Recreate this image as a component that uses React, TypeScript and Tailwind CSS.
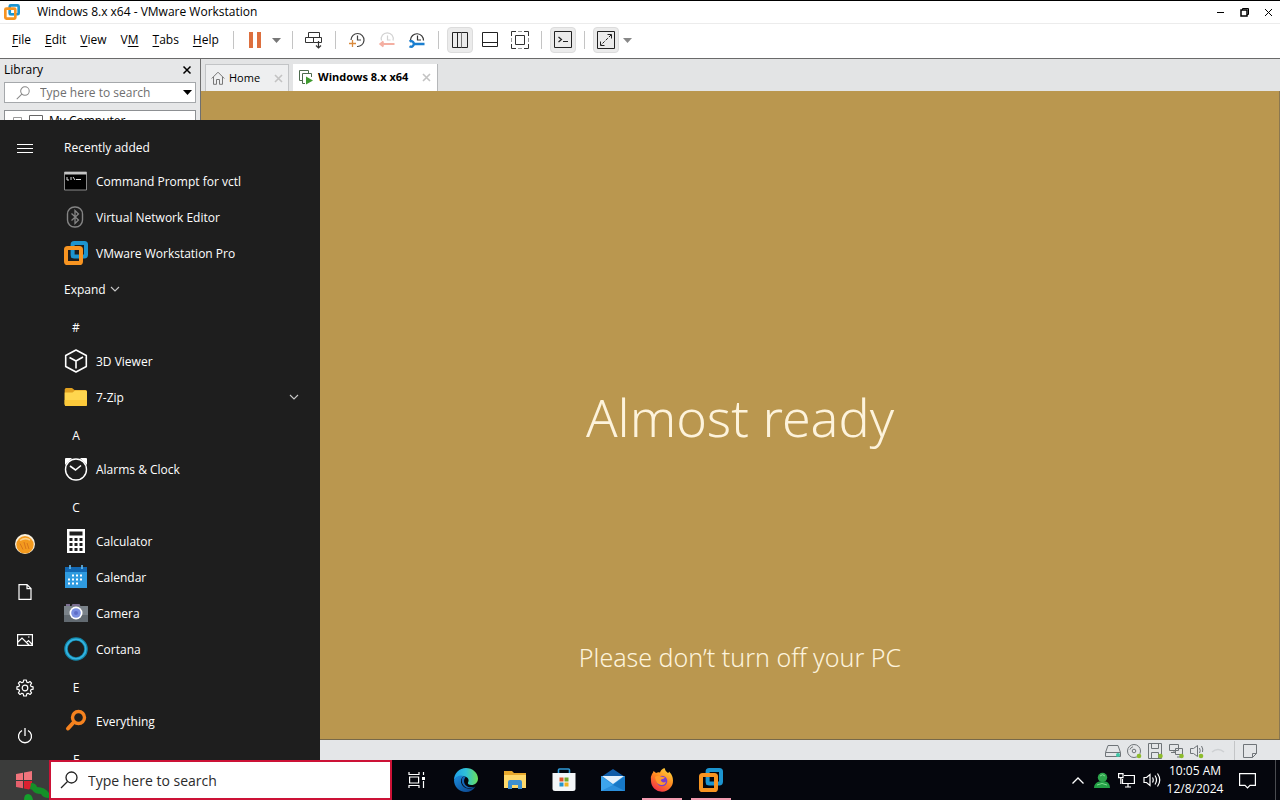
import type { ReactNode } from "react";

function VmwareLogo({ size }: { size: number }) {
  return (
    <svg width={size} height={size} viewBox="0 0 24 24" fill="none" aria-hidden="true">
      <rect x="8.6" y="2" width="13.4" height="13.4" rx="1.6" stroke="#1c94cf" strokeWidth="4" />
      <rect x="2" y="7" width="15" height="15" rx="1.6" stroke="#f79421" strokeWidth="4" />
      <path d="M8.6 9.2V15.4H14.8" stroke="#1c94cf" strokeWidth="2.6" />
    </svg>
  );
}

function Chevron() {
  return (
    <svg width="10" height="10" viewBox="0 0 10 10" fill="none" stroke="#c9c9c9" strokeWidth="1.1" aria-hidden="true">
      <path d="M1 3l4 4 4-4" />
    </svg>
  );
}

function Caret({ color }: { color: string }) {
  return (
    <svg width="9" height="5" viewBox="0 0 9 5" aria-hidden="true">
      <path d="M0 0h9L4.5 5z" fill={color} />
    </svg>
  );
}

function Magnifier({ size, color }: { size: number; color: string }) {
  return (
    <svg width={size} height={size} viewBox="0 0 18 18" fill="none" stroke={color} strokeWidth="1.3" aria-hidden="true">
      <circle cx="11.5" cy="6.5" r="5.5" />
      <path d="M7.5 10.5 1 17" />
    </svg>
  );
}

/* ---------- VMware window ---------- */

const MENUS: [string, string, string][] = [
  ["", "F", "ile"],
  ["", "E", "dit"],
  ["", "V", "iew"],
  ["V", "M", ""],
  ["", "T", "abs"],
  ["", "H", "elp"],
];

function TitleBar() {
  return (
    <header className="flex h-[23px] shrink-0 items-center border-t border-black bg-white">
      <div className="w-[37px] pl-1">
        <VmwareLogo size={16} />
      </div>
      <h1 className="flex-1 text-[12px]">Windows 8.x x64 - VMware Workstation</h1>
      <button aria-label="Minimize" className="flex h-full w-6 items-center justify-center">
        <svg width="9" height="9" viewBox="0 0 9 9"><path d="M1 4.500h7" stroke="#000" /></svg>
      </button>
      <button aria-label="Restore" className="flex h-full w-6 items-center justify-center">
        <svg width="9" height="9" viewBox="0 0 9 9" fill="none" stroke="#000">
          <path d="M2.500 2V.500h6v6H7" />
          <rect x="1" y="2" width="6" height="6" strokeWidth="1.500" />
        </svg>
      </button>
      <button aria-label="Close" className="flex h-full w-6 items-center justify-center">
        <svg width="9" height="9" viewBox="0 0 9 9"><path d="M1 1l7 7M8 1 1 8" stroke="#000" /></svg>
      </button>
    </header>
  );
}

function Separator() {
  return (
    <div className="flex w-[13px] shrink-0 justify-center">
      <div className="h-[18px] w-px bg-[#c4c4c4]" />
    </div>
  );
}

function Tool({ label, active = false, children }: { label: string; active?: boolean; children: ReactNode }) {
  return (
    <button
      aria-label={label}
      className={
        active
          ? "mx-[2px] flex size-[26px] shrink-0 items-center justify-center rounded border border-[#dcdcdc] bg-[#ebebeb]"
          : "mx-[2px] flex size-[26px] shrink-0 items-center justify-center"
      }
    >
      {children}
    </button>
  );
}

function MenuBar() {
  return (
    <div className="flex h-[35px] shrink-0 items-center border-t border-[#ececec] bg-white pb-[2px]">
      <nav className="flex w-[227px] shrink-0 pl-[5px]">
        {MENUS.map(([before, key, after]) => (
          <button key={before + key + after} className="px-[7px] text-[12px]">
            {before}
            <span className="underline underline-offset-2">{key}</span>
            {after}
          </button>
        ))}
      </nav>
      <Separator />
      <Tool label="Suspend">
        <svg width="14" height="16" viewBox="0 0 14 16" fill="#dd6f3e"><path d="M1 0h4v16H1zM9 0h4v16H9z" /></svg>
      </Tool>
      <button aria-label="Power options" className="mr-[3px] flex w-[13px] justify-center">
        <Caret color="#777" />
      </button>
      <Separator />
      <Tool label="Send Ctrl+Alt+Del">
        <svg width="18" height="18" viewBox="0 0 18 18" fill="none" stroke="#333">
          <path d="M3.500 1.500h11v5h-11zM.500 6.500h8v5h-8zM8.500 6.500h8v5h-8z" />
          <path d="M13.500 10v7M11 14.500l2.500 2.500 2.500-2.500" strokeWidth="1.200" />
        </svg>
      </Tool>
      <Separator />
      <Tool label="Take snapshot">
        <svg width="18" height="18" viewBox="0 0 18 18" fill="none" stroke="#444" strokeWidth="1.200">
          <path d="M3 9A6.500 6.500 0 1 1 9 15.500" />
          <path d="M9.500 4.500V9H13" />
          <path d="M1 12.500h7M4.500 9v7" stroke="#d98a3d" strokeWidth="1.300" />
        </svg>
      </Tool>
      <Tool label="Revert snapshot">
        <svg width="18" height="18" viewBox="0 0 18 18" fill="none" stroke="#d2d2d2" strokeWidth="1.200">
          <path d="M3.500 9.500A6 6 0 1 1 15 9.500" />
          <path d="M9.500 4.500V9h3" />
          <path d="M2.500 13h14M5.500 10.500 2.500 13l3 2.500" stroke="#f4afa2" strokeWidth="2.200" />
        </svg>
      </Tool>
      <Tool label="Manage snapshots">
        <svg width="18" height="18" viewBox="0 0 18 18" fill="none" stroke="#333" strokeWidth="1.200">
          <path d="M2.500 9A6.500 6.500 0 1 1 15.500 9.500" />
          <path d="M9.500 4.500V9H13" />
          <path d="M1.500 10.500a2.800 2.800 0 1 1 0 4.800M6 13h10.500" stroke="#1b7fd0" strokeWidth="2.400" />
        </svg>
      </Tool>
      <Separator />
      <Tool label="Show library" active>
        <svg width="18" height="18" viewBox="0 0 18 18" fill="none" stroke="#222"><path d="M1.500 1.500h15v15h-15zM6.500 1.500v15" /><path d="M10.500 1.500v15" stroke="#777" /></svg>
      </Tool>
      <Tool label="Show thumbnail bar">
        <svg width="18" height="18" viewBox="0 0 18 18" fill="none" stroke="#222"><path d="M1.500 1.500h15v14h-15zM1.500 11.500h15" /></svg>
      </Tool>
      <Tool label="Full screen">
        <svg width="20" height="20" viewBox="0 0 20 20" fill="none" stroke="#333"><path d="M1.500 6V1.500H6M14 1.500h4.500V6M18.500 14v4.500H14M6 18.500H1.500V14M5.500 5.500h9v9h-9z" /><path d="M8 1.500h4M18.500 8v4M12 18.500H8M1.500 12V8" stroke="#999" /></svg>
      </Tool>
      <Separator />
      <Tool label="Console view" active>
        <svg width="18" height="18" viewBox="0 0 18 18" fill="none" stroke="#222"><path d="M.500.500h17v16H.500z" /><path d="M4.500 6l3 2.500-3 2.500M9 10.500h5" strokeWidth="1.200" /></svg>
      </Tool>
      <Separator />
      <Tool label="Stretch guest" active>
        <svg width="18" height="18" viewBox="0 0 18 18" fill="none" stroke="#222"><path d="M.500.500h17v17H.500z" /><path d="M10.500 3.500h4v4M3.500 10.500v4h4" /><path d="M14 4 4 14" strokeDasharray="3 1.500" /></svg>
      </Tool>
      <button aria-label="Stretch options" className="flex w-[13px] justify-center">
        <Caret color="#888" />
      </button>
    </div>
  );
}

function Library() {
  return (
    <aside className="flex w-[201px] shrink-0 flex-col border-r border-[#6f6f6f] bg-[#e6e7e8] pl-1">
      <div className="flex h-[23px] items-center justify-between pr-2 pb-[2px]">
        <h2 className="text-[12px]">Library</h2>
        <button aria-label="Close library">
          <svg width="10" height="10" viewBox="0 0 10 10"><path d="M1.500 1.500l7 7M8.500 1.500l-7 7" stroke="#000" strokeWidth="1.500" /></svg>
        </button>
      </div>
      <div className="mr-1 flex h-[21px] items-center border border-[#a5a8ab] bg-white pr-[3px] pl-[11px]">
        <Magnifier size={14} color="#888" />
        <input
          aria-label="Search library"
          placeholder="Type here to search"
          className="ml-[10px] w-0 flex-1 text-[12px] outline-none placeholder:text-[#6f6f6f]"
        />
        <Caret color="#000" />
      </div>
      <div className="mt-[7px] mr-1 flex-1 border border-[#8d9093] bg-white">
        <div className="flex h-5 items-center pl-2 text-[12px]">
          <svg width="9" height="9" viewBox="0 0 9 9" fill="none" stroke="#999"><path d="M.500.500h8v8h-8zM2 4.500h5" /></svg>
          <svg className="ml-[7px]" width="14" height="12" viewBox="0 0 14 12" fill="none" stroke="#666"><path d="M.500.500h13v9H.500zM4 11.500h6" /></svg>
          <span className="ml-[6px]">My Computer</span>
        </div>
      </div>
    </aside>
  );
}

function TabClose() {
  return (
    <svg width="9" height="9" viewBox="0 0 9 9" aria-hidden="true"><path d="M1 1l7 7M8 1 1 8" stroke="#c3c3c3" strokeWidth="1.600" /></svg>
  );
}

function TabStrip() {
  return (
    <div className="flex h-8 shrink-0 items-end gap-1 bg-[#e3e4e5] pl-1" role="tablist">
      <button role="tab" aria-selected="false" className="flex h-[27px] w-[84px] items-center border border-b-0 border-[#c2c4c6] bg-[#eeeff0] pr-[5px] pl-[5px] text-[11px]">
        <svg width="14" height="14" viewBox="0 0 14 14" fill="none" stroke="#777"><path d="M.700 7.500 7 1.200l6.300 6.300M2.500 6v7.300h3V8.500h3v4.800h3V6" /></svg>
        <span className="ml-1 flex-1 text-left">Home</span>
        <TabClose />
      </button>
      <button role="tab" aria-selected="true" className="flex h-[27px] w-[145px] items-center border-r border-[#b5b7b9] bg-white pr-[6px] pl-[6px] text-[11px] font-bold">
        <svg width="15" height="15" viewBox="0 0 15 15" fill="none" stroke="#4e6b4e">
          <path d="M3 10.500H.500V.500h9V3" />
          <path d="M6 13.500H3.500v-10h9V7" />
          <path d="M7 6.500v8l7-4z" fill="#3f9a2f" stroke="none" />
        </svg>
        <span className="ml-1 flex-1 text-left whitespace-nowrap">Windows 8.x x64</span>
        <TabClose />
      </button>
    </div>
  );
}

function StatusBar() {
  return (
    <footer className="flex h-[21px] shrink-0 items-center justify-end gap-[5px] border-t border-[#77694a] bg-[#e4e6e8] pt-px pr-[23px]">
      <svg width="16" height="16" viewBox="0 0 16 16" fill="none" stroke="#6f7478"><path d="M.500 9.500 3 2.500h10l2.500 7v4H.500zM.500 9.500h15" /><circle cx="13" cy="12" r="2" fill="#3cc7a6" stroke="none" /></svg>
      <svg width="16" height="16" viewBox="0 0 16 16" fill="none" stroke="#6f7478"><circle cx="8" cy="8" r="6.500" /><circle cx="8" cy="8" r="1.800" /><path d="M4 6.500A4.500 4.500 0 0 1 7 3.700" /><circle cx="13" cy="13" r="2.300" fill="#8dbb2c" stroke="none" /></svg>
      <svg width="16" height="16" viewBox="0 0 16 16" fill="none" stroke="#6f7478"><path d="M1.500.500h13v15h-13zM4.500.500v5h7v-5M4.500 15.500v-6h7v6" /><circle cx="13.500" cy="13" r="2.300" fill="#8dbb2c" stroke="none" /></svg>
      <svg width="16" height="16" viewBox="0 0 16 16" fill="none" stroke="#6f7478"><path d="M1.500 1.500h9v6h-9zM6 7.500v2M3 9.500h4M7.500 5.500h7v6h-7zM9 14h4" /><circle cx="13.500" cy="13" r="2.300" fill="#8dbb2c" stroke="none" /></svg>
      <svg width="16" height="16" viewBox="0 0 16 16" fill="none" stroke="#6f7478"><path d="M1.500 5.500h3l4-3v11l-4-3h-3zM10.500 5q1.500 3 0 5M12.500 3q2 3 1 6" /><circle cx="12" cy="13" r="2.300" fill="#8dbb2c" stroke="none" /></svg>
      <svg width="16" height="16" viewBox="0 0 16 16" fill="none" stroke="#cdd0d2"><path d="M2 9q6-5 12 0" strokeWidth="1.500" /></svg>
      <div className="ml-[3px] h-full w-px bg-[#c3c5c7]" />
      <svg className="ml-[3px]" width="14" height="14" viewBox="0 0 14 14" fill="none" stroke="#6f7478"><path d="M.500.500h13v9l-4 4h-9zM9.500 13.500v-4h4" /></svg>
    </footer>
  );
}

/* ---------- Start menu ---------- */

const appIcons: Record<string, ReactNode> = {
  cmd: (
    <svg width="24" height="24" viewBox="0 0 24 24"><path d="M.500 3h22v18H.500z" fill="#000" stroke="#8a8a8a" /><path d="M.500 3h22v2.500H.500z" fill="#c4c4c4" /><path d="M3 8v3h2M7 8v3M9 8l2 3M12 10.500h5" stroke="#ddd" fill="none" /></svg>
  ),
  network: (
    <svg width="24" height="24" viewBox="0 0 24 24" fill="none" stroke="#858585"><rect x="3.500" y="2" width="15" height="20" rx="7" strokeWidth="1.400" /><path d="M7.500 8.500l7 6.500-3.500 3.500v-13l3.500 3.500-7 6.500" strokeWidth="1.300" /></svg>
  ),
  vmware: <VmwareLogo size={24} />,
  cube: (
    <svg width="24" height="24" viewBox="0 0 24 24" fill="none" stroke="#fff" strokeWidth="1.600" strokeLinejoin="round"><path d="M12 1 22.300 6.500v11L12 23 1.700 17.500v-11zM5.500 8.500 12 12l7-4M12 12v7.500" /></svg>
  ),
  folder: (
    <svg width="24" height="24" viewBox="0 0 24 24"><path d="M.700 4.500q0-1.500 1.500-1.500H8l2.500 2h11q1.500 0 1.500 1.500V19H.700z" fill="#e0a020" /><path d="M.700 7.500h7.800l2.500-2h10.500q1.500 0 1.500 1.500v12.500q0 1.500-1.500 1.500H2.200q-1.500 0-1.500-1.500z" fill="#ffd64f" /><path d="M.700 15h22.300v4.500q0 1.500-1.500 1.500H2.200q-1.500 0-1.500-1.500z" fill="#fbc93a" /></svg>
  ),
  clock: (
    <svg width="24" height="24" viewBox="0 0 24 24" fill="none"><path d="M1 8V2q0-1 1-1h6zM23 8V2q0-1-1-1h-6z" fill="#fff" /><circle cx="12" cy="12.500" r="10.500" fill="#1e1e1e" stroke="#fff" strokeWidth="1.400" /><path d="M6 9l5.500 4L17 8.500" stroke="#fff" strokeWidth="1.600" /></svg>
  ),
  calculator: (
    <svg width="24" height="24" viewBox="0 0 24 24"><path d="M3 0h18v24H3z" fill="#fff" /><path d="M5.500 2.500h13v4h-13zM5.500 9h3v3h-3zM10.500 9h3v3h-3zM15.500 9h3v3h-3zM5.500 14h3v3h-3zM10.500 14h3v3h-3zM15.500 14h3v3h-3zM5.500 19h3v3h-3zM10.500 19h3v3h-3zM15.500 19h3v3h-3z" fill="#1e1e1e" /></svg>
  ),
  calendar: (
    <svg width="24" height="24" viewBox="0 0 24 24"><path d="M1 2h22v21H1z" fill="#2f9be0" /><path d="M1 2h22v5H1z" fill="#1268b3" /><path d="M6 0v4M18 0v4" stroke="#67bdf2" strokeWidth="1.600" /><path d="M8 10.500h12M4 14.500h15M4 18.500h11" stroke="#fff" strokeWidth="2" strokeDasharray="2 2" /></svg>
  ),
  camera: (
    <svg width="24" height="24" viewBox="0 0 24 24"><path d="M2 3h4v3H2zM8.500 3h7l1.500 3h-10z" fill="#7b6f91" /><path d="M0 5h24v16H0z" fill="#7b838a" /><path d="M0 14h24v7H0z" fill="#626a71" /><circle cx="12" cy="12" r="6.500" fill="#fff" /><circle cx="12" cy="12" r="4.800" fill="#7b8fe0" /><circle cx="12" cy="12" r="2" fill="#5f6dc8" /></svg>
  ),
  cortana: (
    <svg width="24" height="24" viewBox="0 0 24 24" fill="none"><circle cx="12" cy="12" r="10" stroke="#1386a8" strokeWidth="3.600" /><circle cx="12" cy="12" r="9.800" stroke="#35b4e2" strokeWidth="1.600" /></svg>
  ),
  everything: (
    <svg width="24" height="24" viewBox="0 0 24 24" fill="none" stroke="#f5821f" strokeLinecap="round"><circle cx="14.500" cy="8.500" r="6" strokeWidth="3.400" /><path d="M9.500 13.500 4 19.500" strokeWidth="4" /></svg>
  ),
};

type Entry =
  | { kind: "heading"; text: string }
  | { kind: "expand"; text: string }
  | { kind: "letter"; text: string }
  | { kind: "app"; text: string; icon: string; folder?: boolean };

const ENTRIES: Entry[] = [
  { kind: "heading", text: "Recently added" },
  { kind: "app", text: "Command Prompt for vctl", icon: "cmd" },
  { kind: "app", text: "Virtual Network Editor", icon: "network" },
  { kind: "app", text: "VMware Workstation Pro", icon: "vmware" },
  { kind: "expand", text: "Expand" },
  { kind: "letter", text: "#" },
  { kind: "app", text: "3D Viewer", icon: "cube" },
  { kind: "app", text: "7-Zip", icon: "folder", folder: true },
  { kind: "letter", text: "A" },
  { kind: "app", text: "Alarms & Clock", icon: "clock" },
  { kind: "letter", text: "C" },
  { kind: "app", text: "Calculator", icon: "calculator" },
  { kind: "app", text: "Calendar", icon: "calendar" },
  { kind: "app", text: "Camera", icon: "camera" },
  { kind: "app", text: "Cortana", icon: "cortana" },
  { kind: "letter", text: "E" },
  { kind: "app", text: "Everything", icon: "everything" },
  { kind: "letter", text: "F" },
];

function EntryRow({ entry }: { entry: Entry }) {
  if (entry.kind === "heading") return <h2 className="flex h-9 items-center pt-[6px]">{entry.text}</h2>;
  if (entry.kind === "letter")
    return <button className="flex h-9 w-6 items-center justify-center pt-[6px]">{entry.text}</button>;
  if (entry.kind === "expand")
    return (
      <button className="flex h-9 items-center gap-1">
        <span className="pt-[2px]">{entry.text}</span>
        <Chevron />
      </button>
    );
  return (
    <button className="flex h-9 w-full items-center gap-2 pr-[21px] text-left">
      {appIcons[entry.icon]}
      <span className="flex-1 pt-[2px]">{entry.text}</span>
      {entry.folder && <Chevron />}
    </button>
  );
}

function RailButton({ label, children }: { label: string; children: ReactNode }) {
  return (
    <button aria-label={label} className="flex h-12 w-[50px] items-center justify-center">
      {children}
    </button>
  );
}

function StartMenu() {
  return (
    <section aria-label="Start" className="absolute bottom-0 left-0 flex h-[640px] w-80 overflow-hidden bg-[#1e1e1e] text-[12px] text-white">
      <div className="flex w-[50px] shrink-0 flex-col pt-1">
        <RailButton label="Menu">
          <svg width="16" height="12" viewBox="0 0 16 12" stroke="#fff"><path d="M0 2.500h16M0 6.500h16M0 10.500h16" /></svg>
        </RailButton>
        <div className="flex-1" />
        <RailButton label="Account">
          <svg width="20" height="20" viewBox="0 0 20 20"><circle cx="10" cy="10" r="10" fill="#f8f0de" /><circle cx="10" cy="10.800" r="8.700" fill="#f39a1e" /><path d="M5 6.500q5-3.500 10-.5" stroke="#fbd08a" fill="none" strokeWidth="1.500" /><path d="M5 9.500l3 6M12 9l2 6M9 8l2 7" stroke="#d9761a" fill="none" /></svg>
        </RailButton>
        <RailButton label="Documents">
          <svg width="14" height="16" viewBox="0 0 14 16" fill="none" stroke="#fff" strokeWidth="1.200"><path d="M1 .600h8l4 4v10.800H1zM9 .600v4h4" /></svg>
        </RailButton>
        <RailButton label="Pictures">
          <svg width="16" height="12" viewBox="0 0 16 12" fill="none" stroke="#fff" strokeWidth="1.200"><path d="M.600.600h14.800v10.800H.600zM1 8l4-4 7 7M9.500 8.500 11.500 6.500l3.800 4" /><path d="M11 3h1.500" /></svg>
        </RailButton>
        <RailButton label="Settings">
          <svg width="18" height="18" viewBox="0 0 18 18" fill="none" stroke="#fff" strokeWidth="1.200" strokeLinejoin="round">
            <path d="M7.700 1h2.600l.500 2.100 1.300.600 1.900-1.200 1.600 1.600-1.200 1.900.6 1.300 2.100.500v2.400l-2.100.5-.6 1.300 1.200 1.900-1.600 1.600-1.900-1.200-1.300.6-.5 2.100H7.700l-.5-2.100-1.300-.6L4 15.500l-1.600-1.600L3.600 12 3 10.700.900 10.200V7.800L3 7.300 3.600 6 2.400 4.100 4 2.500l1.900 1.200 1.300-.6z" />
            <circle cx="9" cy="9" r="2.800" />
          </svg>
        </RailButton>
        <RailButton label="Power">
          <svg width="16" height="16" viewBox="0 0 16 16" fill="none" stroke="#fff" strokeWidth="1.300"><path d="M5 2.500a6.500 6.500 0 1 0 6 0M8 0v8" /></svg>
        </RailButton>
      </div>
      <div className="flex flex-1 flex-col pt-[7px] pl-[14px]">
        {ENTRIES.map((entry) => (
          <div key={entry.text} className="shrink-0">
            <EntryRow entry={entry} />
          </div>
        ))}
      </div>
    </section>
  );
}

/* ---------- Taskbar ---------- */

function TaskButton({ label, running = false, children }: { label: string; running?: boolean; children: ReactNode }) {
  return (
    <button aria-label={label} className="flex h-full w-[49px] flex-col items-center">
      <span className="flex flex-1 items-center pt-[2px]">{children}</span>
      <span className={running ? "h-[2px] w-10 bg-[#f29bb0]" : "h-[2px] w-10"} />
    </button>
  );
}

function Taskbar() {
  return (
    <div className="flex h-10 shrink-0 items-center bg-[#05060d] text-white">
      <button aria-label="Start" className="flex h-full w-[49px] items-end justify-end bg-[#3b3c3b]">
        <svg width="33" height="30" viewBox="0 0 33 30">
          <path d="M0 4l7-1.200V10H0zM8 2.600 16 1v9H8z" fill="#f0747c" />
          <path d="M0 11h7v7.200L0 17z" fill="#e5606c" />
          <path d="M8 11h8v5l-3 3.500-5-1z" fill="#dc2030" />
          <path d="M15 13q5 0 6 4 8 0 12 6v5q-6 0-8-4-6 0-8-3-1-2-3-2z" fill="#149128" />
          <path d="M8 30q0-6 4-6t5 6z" fill="#14a02c" />
        </svg>
      </button>
      <label className="flex h-10 w-[343px] items-center border-2 border-[#cc1236] bg-white pl-[9px]">
        <Magnifier size={18} color="#222" />
        <input
          aria-label="Search"
          placeholder="Type here to search"
          className="ml-[10px] min-w-0 flex-1 text-[14px] outline-none placeholder:text-[#2b2b2b]"
        />
      </label>
      <TaskButton label="Task View">
        <svg width="18" height="16" viewBox="0 0 18 16" fill="none" stroke="#fff" strokeWidth="1.200"><path d="M1 0v2.500h10V0M1 16v-2.500h10V16M1.600 5h9v6h-9zM15.500 0v3M15.500 9v7" /><path d="M14 5h3v3h-3z" fill="#fff" stroke="none" /></svg>
      </TaskButton>
      <TaskButton label="Edge">
        <svg width="24" height="24" viewBox="0 0 24 24">
          <defs>
            <linearGradient id="edgeTop" x1="0" y1=".4" x2="1" y2=".4"><stop offset="0" stopColor="#1f9fe8" /><stop offset=".5" stopColor="#2fc0d8" /><stop offset="1" stopColor="#6be058" /></linearGradient>
            <linearGradient id="edgeLow" x1="0" y1="0" x2="1" y2="1"><stop offset="0" stopColor="#1b8fe0" /><stop offset="1" stopColor="#0b3f86" /></linearGradient>
          </defs>
          <path d="M0 12C0 5 5.400 0 12 0s12 5 12 10.500c0 4-3 6.500-6.500 6.500-3 0-4-1.300-3.500-2.500.8-1.500.8-2.500 0-4C12.500 7.500 4 6 0 12z" fill="url(#edgeTop)" />
          <path d="M0 12c2-4 6-5.500 10-4-4 2-4 8 0 11 3.500 2.600 8.500 2 11.500-.500C19.500 22 16 24 12 24 5 24 0 18.700 0 12z" fill="url(#edgeLow)" />
          <path d="M10 8c-3 2-3 7 0 10 3 3 8 2.500 11.500.5-3 1.500-7.500 1-9.500-1-2.500-2.500-2.500-6-.500-8z" fill="#1465b8" />
        </svg>
      </TaskButton>
      <TaskButton label="File Explorer">
        <svg width="22" height="20" viewBox="0 0 22 20"><path d="M0 1h8l2 2h12v15H0z" fill="#e8a92d" /><path d="M0 5h22v13H0z" fill="#ffd96b" /><path d="M4 19v-7q0-2 2-2h10q2 0 2 2v7h-4v-4H8v4z" fill="#3e8fd0" /></svg>
      </TaskButton>
      <TaskButton label="Microsoft Store">
        <svg width="24" height="24" viewBox="0 0 24 24"><path d="M6.500 6V2q0-1 1-1h9q1 0 1 1v4" fill="none" stroke="#2f9bd8" strokeWidth="1.600" /><path d="M.500 5h23v15.500q0 2.500-2.500 2.500H3q-2.500 0-2.500-2.500z" fill="#f4f6f8" /><path d="M7.500 9.500h4v4h-4z" fill="#e0552b" /><path d="M12.500 9.500h4v4h-4z" fill="#74a82b" /><path d="M7.500 14.500h4v4h-4z" fill="#2595cf" /><path d="M12.500 14.500h4v4h-4z" fill="#f1b424" /></svg>
      </TaskButton>
      <TaskButton label="Mail">
        <svg width="24" height="22" viewBox="0 0 24 22"><path d="M0 8l12-8 12 8z" fill="#0f5ca8" /><path d="M0 7h24v15H0z" fill="#2b8fdc" /><path d="M1 7h22L12 15z" fill="#e4f1fb" /><path d="M0 7l12 9L0 22z" fill="#3da5ec" /><path d="M24 7 12 16l12 6z" fill="#1778c6" /></svg>
      </TaskButton>
      <TaskButton label="Firefox" running>
        <svg width="24" height="24" viewBox="0 0 24 24">
          <defs><linearGradient id="fox" x1=".8" y1="0" x2=".2" y2="1"><stop offset="0" stopColor="#ffd83a" /><stop offset=".5" stopColor="#ff8420" /><stop offset="1" stopColor="#f0284f" /></linearGradient></defs>
          <path d="M2 6q1-1 1.500-3Q5 4 6 5q2-1 4-.5Q11 1 14.500 0q.5 3 3.500 5 1-.5 1-1.500 4 4 4 9a11 11 0 0 1-22 .5Q0 9 2 6z" fill="url(#fox)" />
          <circle cx="12" cy="13" r="5.300" fill="#7a3fd0" />
          <path d="M5 9q3-2 6-.5 2 .8 4 .8-1 2-3.500 2-1.500 1.200.5 2.700 2 1 4-.5-1 4-5 3.500Q6 16.500 5 9z" fill="#ff9a2b" />
        </svg>
      </TaskButton>
      <TaskButton label="VMware Workstation" running>
        <VmwareLogo size={24} />
      </TaskButton>
      <div className="flex-1" />
      <div className="flex items-center gap-2">
        <button aria-label="Show hidden icons" className="flex w-4 justify-center">
          <svg width="12" height="7" viewBox="0 0 12 7" fill="none" stroke="#fff" strokeWidth="1.300"><path d="M.500 6.500 6 1l5.500 5.500" /></svg>
        </button>
        <svg width="16" height="17" viewBox="0 0 16 17"><circle cx="8.500" cy="5.500" r="4.700" fill="#2da54b" /><path d="M0 16q0-5 5-6.500h7q4 1.500 4 6.500z" fill="#23a046" /><path d="M6 4q2.500-2.500 5 0M3 13q5-3 10 0" stroke="#7ddc90" fill="none" /></svg>
        <svg width="17" height="15" viewBox="0 0 17 15" fill="none" stroke="#fff" strokeWidth="1.200"><path d="M6 2.500h10.400v8H4.500V6M10 10.500V14M7 14h6M.600.600h4.400v4H.600zM2.800 5v6" /></svg>
        <svg width="18" height="16" viewBox="0 0 18 16" fill="none" stroke="#fff" strokeWidth="1.200"><path d="M1 5.500h2.500L7 2.500v11l-3.500-3H1zM9.500 5.500q1.500 2.500 0 5M12 3.500q3 4.500 0 9M14.500 1.500q4.500 6.500 0 13" /></svg>
      </div>
      <div className="ml-1 w-[60px] text-center text-[12px] leading-[18px]">
        <div>10:05 AM</div>
        <div>12/8/2024</div>
      </div>
      <button aria-label="Notifications" className="flex w-11 justify-center">
        <svg width="17" height="17" viewBox="0 0 17 17" fill="none" stroke="#fff" strokeWidth="1.200"><path d="M.600 1.600h15.800v11.800H11l-2.500 2.500L6 13.400H.600z" /></svg>
      </button>
      <button aria-label="Show desktop" className="ml-[6px] h-full w-[5px] border-l border-[#4a4b50]" />
    </div>
  );
}

export default function App() {
  return (
    <div className="flex h-screen flex-col overflow-hidden bg-white font-['Open_Sans','Noto_Sans',sans-serif] text-black">
      <div className="relative flex min-h-0 flex-1 flex-col">
        <TitleBar />
        <MenuBar />
        <div className="flex min-h-0 flex-1 border-t border-[#6a6a6a]">
          <Library />
          <div className="flex min-w-0 flex-1 flex-col">
            <TabStrip />
            <main className="flex min-h-0 flex-1 flex-col items-center justify-end gap-[190px] border-r border-[#8a7750] bg-[#ba974f] pb-[64px] font-['Noto_Sans',sans-serif] font-light text-[#fdf3dc]">
              <p className="text-[52px] leading-[64px]">Almost ready</p>
              <p className="text-[25px] leading-[36px]">Please don’t turn off your PC</p>
            </main>
            <StatusBar />
          </div>
        </div>
        <StartMenu />
      </div>
      <Taskbar />
    </div>
  );
}
